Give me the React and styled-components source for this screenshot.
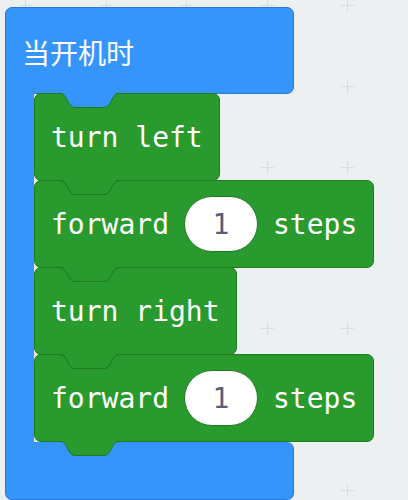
import styled, { createGlobalStyle } from "styled-components"

const BLUE = "#3595fd"
const BLUE_DARK = "#2b78d4"
const GREEN = "#299a2d"
const GREEN_DARK = "#1f7a22"

const GlobalStyle = createGlobalStyle`
  html, body {
    margin: 0;
    padding: 0;
    background: #ecf0f1;
  }
`

const Canvas = styled.div`
  position: relative;
  width: 408px;
  height: 500px;
  overflow: hidden;
  background: #ecf0f1;
`

const Grid = styled.svg`
  position: absolute;
  inset: 0;
`

const Script = styled.div`
  position: relative;
  display: flex;
  flex-direction: column;
  align-items: flex-start;
  padding: 7px 0 0 5px;
`

const Hat = styled.div`
  display: flex;
  flex-direction: column;
  align-items: flex-start;
`

const HatTop = styled.div`
  box-sizing: border-box;
  width: 289px;
  height: 87px;
  display: flex;
  align-items: center;
  padding: 3px 16px 0;
  background: ${BLUE};
  border: 1px solid ${BLUE_DARK};
  border-radius: 7px 7px 7px 0;
  color: #fff;
  font: 28px "Noto Sans CJK SC", "Noto Sans", sans-serif;
`

const HatBody = styled.div`
  display: flex;
  margin-top: -1px;
`

const Arm = styled.div`
  box-sizing: border-box;
  width: 29px;
  flex-shrink: 0;
  background: ${BLUE};
  border-left: 1px solid ${BLUE_DARK};
`

const Stack = styled.div`
  display: flex;
  flex-direction: column;
  align-items: flex-start;
`

const HatBottom = styled.div`
  box-sizing: border-box;
  width: 289px;
  height: 58px;
  background: ${BLUE};
  border: 1px solid ${BLUE_DARK};
  border-top: none;
  border-radius: 0 7px 7px 7px;
`

const Block = styled.div`
  position: relative;
  box-sizing: border-box;
  display: flex;
  align-items: center;
  gap: 15px;
  height: 88px;
  margin-top: ${p => (p.$first ? "0" : "-1px")};
  padding: 0 16px;
  background: ${GREEN};
  border: 1px solid ${GREEN_DARK};
  border-radius: 7px;
  color: #fff;
  font: 28px "DejaVu Sans Mono", monospace;
  white-space: pre;
`

const Notch = styled.svg`
  position: absolute;
  left: 25px;
  top: ${p => (p.$bottom ? "100%" : "-1px")};
  z-index: ${p => (p.$bottom ? 1 : 0)};
  overflow: visible;
`

const NumberField = styled.span`
  box-sizing: border-box;
  display: inline-flex;
  align-items: center;
  justify-content: center;
  width: 74px;
  height: 56px;
  border-radius: 28px;
  background: #fff;
  border: 1px solid ${GREEN_DARK};
  color: #575e75;
`

const TAB_FILL = "M0,0 C8,0 7,14.5 15,14.5 L44,14.5 C52,14.5 51,0 59,0 Z"
const TAB_LINE = "M0,0.5 C8,0.5 7,14.5 15,14.5 L44,14.5 C52,14.5 51,0.5 59,0.5"

function Tab({ fill, bottom }) {
  return (
    <Notch width="60" height="16" viewBox="0 0 60 16" $bottom={bottom}>
      <path d={TAB_FILL} fill={fill}/>
      <path d={TAB_LINE} fill="none" stroke={GREEN_DARK} strokeWidth="1"/>
    </Notch>
  )
}

function Statement({ first, above, children }) {
  return (
    <Block $first={first}>
      <Tab fill={above}/>
      {children}
      <Tab fill={GREEN} bottom/>
    </Block>
  )
}

const xs = [0, 1, 2, 3, 4].map(i => Math.round(25 + i * 80.6) + 0.5)
const ys = [0, 1, 2, 3, 4, 5, 6].map(i => Math.round(5 + i * 80.8) + 0.5)

function Crosses() {
  return (
    <Grid width="408" height="500">
      {ys.map(y => xs.map(x => (
        <path
          key={x + "-" + y}
          d={`M${x - 6.5},${y} H${x + 6.5} M${x},${y - 6.5} V${y + 6.5}`}
          stroke="#d7dde0"
          strokeWidth="1"
        />
      )))}
    </Grid>
  )
}

export default function App () {
  return (
    <>
      <GlobalStyle/>
      <Canvas>
        <Crosses/>
        <Script>
          <Hat>
            <HatTop>当开机时</HatTop>
            <HatBody>
              <Arm/>
              <Stack>
                <Statement first above={BLUE}>turn left</Statement>
                <Statement above={GREEN}>
                  forward<NumberField>1</NumberField>steps
                </Statement>
                <Statement above={GREEN}>turn right</Statement>
                <Statement above={GREEN}>
                  forward<NumberField>1</NumberField>steps
                </Statement>
              </Stack>
            </HatBody>
            <HatBottom/>
          </Hat>
        </Script>
      </Canvas>
    </>
  )
}
